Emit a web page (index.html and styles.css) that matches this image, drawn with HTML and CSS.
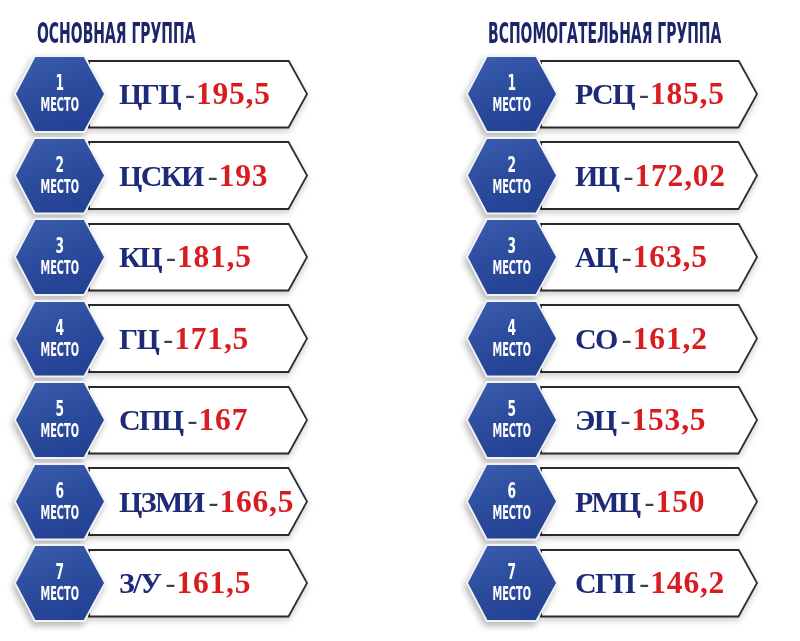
FILE: index.html
```html
<!DOCTYPE html>
<html lang="ru">
<head>
<meta charset="utf-8">
<title>Итоги</title>
<link rel="stylesheet" href="styles.css">
</head>
<body>
<main class="board">
  <section class="group">
    <h2 class="title"><span class="title-text">ОСНОВНАЯ ГРУППА</span></h2>
    <ol class="list">
      <li class="row"><div class="hex-wrap"><div class="hex"><div class="hex-in"><span class="num">1</span><span class="place">МЕСТО</span></div></div></div><div class="box-wrap"><div class="box"><div class="box-in"><span class="name">ЦГЦ</span><span class="dash">-</span><span class="score">195,5</span></div></div></div></li>
      <li class="row"><div class="hex-wrap"><div class="hex"><div class="hex-in"><span class="num">2</span><span class="place">МЕСТО</span></div></div></div><div class="box-wrap"><div class="box"><div class="box-in"><span class="name">ЦСКИ</span><span class="dash">-</span><span class="score">193</span></div></div></div></li>
      <li class="row"><div class="hex-wrap"><div class="hex"><div class="hex-in"><span class="num">3</span><span class="place">МЕСТО</span></div></div></div><div class="box-wrap"><div class="box"><div class="box-in"><span class="name">КЦ</span><span class="dash">-</span><span class="score">181,5</span></div></div></div></li>
      <li class="row"><div class="hex-wrap"><div class="hex"><div class="hex-in"><span class="num">4</span><span class="place">МЕСТО</span></div></div></div><div class="box-wrap"><div class="box"><div class="box-in"><span class="name">ГЦ</span><span class="dash">-</span><span class="score">171,5</span></div></div></div></li>
      <li class="row"><div class="hex-wrap"><div class="hex"><div class="hex-in"><span class="num">5</span><span class="place">МЕСТО</span></div></div></div><div class="box-wrap"><div class="box"><div class="box-in"><span class="name">СПЦ</span><span class="dash">-</span><span class="score">167</span></div></div></div></li>
      <li class="row"><div class="hex-wrap"><div class="hex"><div class="hex-in"><span class="num">6</span><span class="place">МЕСТО</span></div></div></div><div class="box-wrap"><div class="box"><div class="box-in"><span class="name">ЦЗМИ</span><span class="dash">-</span><span class="score">166,5</span></div></div></div></li>
      <li class="row"><div class="hex-wrap"><div class="hex"><div class="hex-in"><span class="num">7</span><span class="place">МЕСТО</span></div></div></div><div class="box-wrap"><div class="box"><div class="box-in"><span class="name">З/У</span><span class="dash">-</span><span class="score">161,5</span></div></div></div></li>
    </ol>
  </section>
  <section class="group group-right">
    <h2 class="title"><span class="title-text">ВСПОМОГАТЕЛЬНАЯ ГРУППА</span></h2>
    <ol class="list">
      <li class="row"><div class="hex-wrap"><div class="hex"><div class="hex-in"><span class="num">1</span><span class="place">МЕСТО</span></div></div></div><div class="box-wrap"><div class="box"><div class="box-in"><span class="name">РСЦ</span><span class="dash">-</span><span class="score">185,5</span></div></div></div></li>
      <li class="row"><div class="hex-wrap"><div class="hex"><div class="hex-in"><span class="num">2</span><span class="place">МЕСТО</span></div></div></div><div class="box-wrap"><div class="box"><div class="box-in"><span class="name">ИЦ</span><span class="dash">-</span><span class="score">172,02</span></div></div></div></li>
      <li class="row"><div class="hex-wrap"><div class="hex"><div class="hex-in"><span class="num">3</span><span class="place">МЕСТО</span></div></div></div><div class="box-wrap"><div class="box"><div class="box-in"><span class="name">АЦ</span><span class="dash">-</span><span class="score">163,5</span></div></div></div></li>
      <li class="row"><div class="hex-wrap"><div class="hex"><div class="hex-in"><span class="num">4</span><span class="place">МЕСТО</span></div></div></div><div class="box-wrap"><div class="box"><div class="box-in"><span class="name">СО</span><span class="dash">-</span><span class="score">161,2</span></div></div></div></li>
      <li class="row"><div class="hex-wrap"><div class="hex"><div class="hex-in"><span class="num">5</span><span class="place">МЕСТО</span></div></div></div><div class="box-wrap"><div class="box"><div class="box-in"><span class="name">ЭЦ</span><span class="dash">-</span><span class="score">153,5</span></div></div></div></li>
      <li class="row"><div class="hex-wrap"><div class="hex"><div class="hex-in"><span class="num">6</span><span class="place">МЕСТО</span></div></div></div><div class="box-wrap"><div class="box"><div class="box-in"><span class="name">РМЦ</span><span class="dash">-</span><span class="score">150</span></div></div></div></li>
      <li class="row"><div class="hex-wrap"><div class="hex"><div class="hex-in"><span class="num">7</span><span class="place">МЕСТО</span></div></div></div><div class="box-wrap"><div class="box"><div class="box-in"><span class="name">СГП</span><span class="dash">-</span><span class="score">146,2</span></div></div></div></li>
    </ol>
  </section>
</main>
</body>
</html>
```

FILE: styles.css
```css
* { box-sizing: border-box; }
html, body { margin: 0; padding: 0; background: #ffffff; }
body { width: 800px; height: 641px; overflow: hidden; }

.board {
  display: grid;
  grid-template-columns: 294px 292px;
  column-gap: 158px;
  padding-left: 14px;
}

.title {
  margin: 0;
  height: 55px;
  padding: 19px 0 0 23px;
  font-family: "DejaVu Sans", sans-serif;
  font-stretch: condensed;
  font-weight: bold;
  font-size: 29px;
  line-height: 29px;
  color: #1b2568;
  white-space: nowrap;
  overflow: hidden;
}
.group-right .title { padding-left: 22px; }
.title-text {
  display: inline-block;
  transform: scaleX(0.535);
  transform-origin: 0 50%;
}

.list { list-style: none; margin: 0; padding: 0; }

.row {
  display: flex;
  align-items: center;
  height: 78px;
  margin-bottom: 3.5px;
}

.hex-wrap {
  flex: none;
  width: 92px;
  height: 78px;
  z-index: 2;
  filter: drop-shadow(-2px 4px 3px rgba(0, 0, 0, 0.28));
}
.hex {
  width: 100%;
  height: 100%;
  padding: 2px;
  background: #f2f3f6;
  clip-path: polygon(22% 0, 77% 0, 100% 50%, 77% 100%, 22% 100%, 0 50%);
}
.hex-in {
  width: 100%;
  height: 100%;
  clip-path: polygon(22% 0, 77% 0, 100% 50%, 77% 100%, 22% 100%, 0 50%);
  background: linear-gradient(160deg, #3d5eae 0%, #2c4c9e 45%, #223f92 100%);
  display: flex;
  flex-direction: column;
  align-items: center;
  justify-content: center;
  color: #ffffff;
  font-family: "DejaVu Sans", sans-serif;
  font-stretch: condensed;
  font-weight: bold;
  padding-bottom: 2px;
}
.num {
  display: block;
  font-size: 22px;
  line-height: 22px;
  transform: scaleX(0.62);
}
.place {
  display: block;
  font-size: 19px;
  line-height: 20px;
  transform: scaleX(0.57);
}

.box-wrap {
  flex: 1;
  height: 69px;
  margin-left: -18px;
  z-index: 1;
  filter: drop-shadow(0 3px 3px rgba(0, 0, 0, 0.2));
}
.box {
  width: 100%;
  height: 100%;
  padding: 2px;
  background: #2b2b2e;
  clip-path: polygon(0 0, calc(100% - 19px) 0, 100% 50%, calc(100% - 19px) 100%, 0 100%);
}
.box-in {
  width: 100%;
  height: 100%;
  background: #ffffff;
  clip-path: polygon(0 0, calc(100% - 18px) 0, 100% 50%, calc(100% - 18px) 100%, 0 100%);
  display: flex;
  align-items: center;
  padding-left: 29px;
  font-family: "Liberation Serif", "Times New Roman", serif;
  font-weight: bold;
  font-size: 30px;
  white-space: nowrap;
}
.group-right .box-in { padding-left: 33px; }
.name { color: #1d2a78; letter-spacing: -1.6px; }
.dash { color: #3b3f55; margin: 0 1px 0 5px; font-weight: normal; }
.score { color: #d81c1f; font-size: 31.5px; letter-spacing: 0.8px; }
```
